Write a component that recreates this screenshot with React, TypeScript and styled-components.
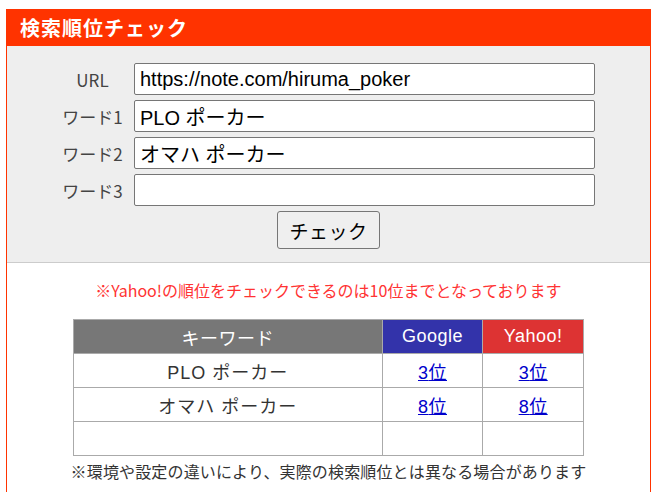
import styled, { createGlobalStyle } from "styled-components";

const GlobalStyle = createGlobalStyle`
  body {
    margin: 0;
    padding: 9px 0 0 6px;
    background: #ffffff;
    font-family: "Liberation Sans", "Noto Sans CJK JP", sans-serif;
  }
`;

const Box = styled.div`
  width: 643px;
  border: 1px solid #ff3300;
  border-top: none;
`;

const Title = styled.h1`
  margin: 0;
  height: 37px;
  padding-left: 13px;
  background: #ff3300;
  color: #ffffff;
  font-family: "Noto Sans CJK JP", sans-serif;
  font-size: 20px;
  font-weight: 700;
  letter-spacing: 1px;
  line-height: 37px;
`;

const FormArea = styled.form`
  background: #eeeeee;
  padding: 17px 0 13px;
  border-bottom: 1px solid #cccccc;
  display: flex;
  flex-direction: column;
  gap: 5px;
`;

const Row = styled.div`
  display: grid;
  grid-template-columns: 75px 461px;
  column-gap: 4px;
  align-items: center;
  padding-left: 48px;
`;

const Label = styled.label`
  text-align: center;
  color: #444444;
  font-family: "Noto Sans CJK JP", sans-serif;
  font-size: 17px;
`;

const Input = styled.input`
  box-sizing: border-box;
  height: 32px;
  width: 461px;
  border: 1px solid #767676;
  border-radius: 2px;
  background: #ffffff;
  padding: 0 5px;
  font-family: "Liberation Sans", "Noto Sans CJK JP", sans-serif;
  font-size: 20px;
  color: #000000;
  outline: none;
`;

const ButtonRow = styled.div`
  display: flex;
  justify-content: center;
`;

const CheckButton = styled.button`
  box-sizing: border-box;
  width: 103px;
  height: 38px;
  border: 1px solid #767676;
  border-radius: 3px;
  background: #efefef;
  font-family: "Noto Sans CJK JP", sans-serif;
  font-size: 19px;
  letter-spacing: 0.5px;
  color: #000000;
`;

const Result = styled.div`
  padding: 15px 0 10px;
  display: flex;
  flex-direction: column;
  align-items: center;
`;

const Note = styled.p<{ $tone: "warn" | "info" }>`
  margin: 0;
  line-height: 24px;
  font-family: "Noto Sans CJK JP", sans-serif;
  font-size: 16px;
  letter-spacing: ${(p) => (p.$tone === "warn" ? "0" : "0.15px")};
  color: ${(p) => (p.$tone === "warn" ? "#ff3333" : "#333333")};
`;

const Table = styled.table`
  margin: 17px 0 3px;
  width: 511px;
  border-collapse: collapse;
  font-family: "Liberation Sans", "Noto Sans CJK JP", sans-serif;
`;

const Head = styled.th<{ $bg: string; $w: number }>`
  width: ${(p) => p.$w}px;
  height: 33px;
  padding: 0;
  background: ${(p) => p.$bg};
  color: #ffffff;
  font-size: 18px;
  font-weight: 400;
  letter-spacing: 0.5px;
  border: 1px solid #aaaaaa;
`;

const Cell = styled.td`
  height: 33px;
  padding: 0;
  text-align: center;
  color: #333333;
  font-size: 18px;
  letter-spacing: 1px;
  border: 1px solid #aaaaaa;
`;

const RankLink = styled.a`
  color: #0000cc;
  text-decoration: underline;
  font-size: 18px;
  letter-spacing: 0.5px;
`;

const rows = [
  { word: "PLO ポーカー", google: 3, yahoo: 3 },
  { word: "オマハ ポーカー", google: 8, yahoo: 8 },
  { word: "", google: 0, yahoo: 0 },
];

export default function App() {
  return (
    <>
      <GlobalStyle />
      <Box>
        <Title>検索順位チェック</Title>
        <FormArea onSubmit={(e) => e.preventDefault()}>
          <Row>
            <Label>URL</Label>
            <Input defaultValue="https://note.com/hiruma_poker" />
          </Row>
          <Row>
            <Label>ワード1</Label>
            <Input defaultValue="PLO ポーカー" />
          </Row>
          <Row>
            <Label>ワード2</Label>
            <Input defaultValue="オマハ ポーカー" />
          </Row>
          <Row>
            <Label>ワード3</Label>
            <Input defaultValue="" />
          </Row>
          <ButtonRow>
            <CheckButton type="submit">チェック</CheckButton>
          </ButtonRow>
        </FormArea>
        <Result>
          <Note $tone="warn">※Yahoo!の順位をチェックできるのは10位までとなっております</Note>
          <Table>
            <thead>
              <tr>
                <Head $bg="#777777" $w={310}>キーワード</Head>
                <Head $bg="#3333aa" $w={100}>Google</Head>
                <Head $bg="#dd3333" $w={100}>Yahoo!</Head>
              </tr>
            </thead>
            <tbody>
              {rows.map((r, i) => (
                <tr key={i}>
                  <Cell>{r.word}</Cell>
                  <Cell>{r.google ? <RankLink href="#">{r.google}位</RankLink> : null}</Cell>
                  <Cell>{r.yahoo ? <RankLink href="#">{r.yahoo}位</RankLink> : null}</Cell>
                </tr>
              ))}
            </tbody>
          </Table>
          <Note $tone="info">※環境や設定の違いにより、実際の検索順位とは異なる場合があります</Note>
        </Result>
      </Box>
    </>
  );
}
